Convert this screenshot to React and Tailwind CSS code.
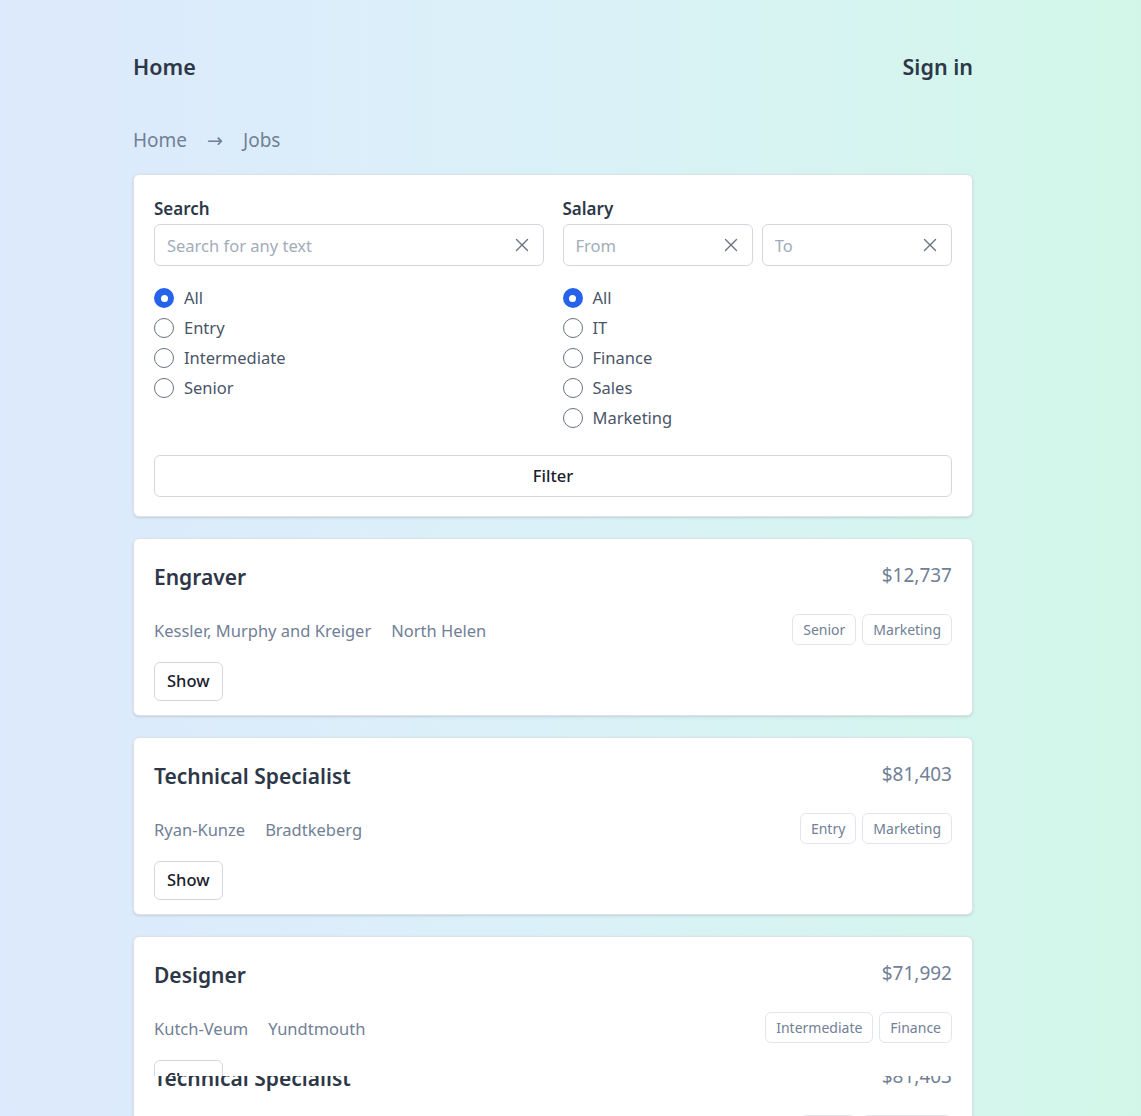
import { useState } from 'react'

const levels = ['All', 'Entry', 'Intermediate', 'Senior']
const categories = ['All', 'IT', 'Finance', 'Sales', 'Marketing']

const jobs = [
  { id: 1, title: 'Engraver', salary: '$12,737', company: 'Kessler, Murphy and Kreiger', city: 'North Helen', tags: ['Senior', 'Marketing'] },
  { id: 2, title: 'Technical Specialist', salary: '$81,403', company: 'Ryan-Kunze', city: 'Bradtkeberg', tags: ['Entry', 'Marketing'] },
  { id: 3, title: 'Designer', salary: '$71,992', company: 'Kutch-Veum', city: 'Yundtmouth', tags: ['Intermediate', 'Finance'] },
]

function XIcon() {
  return (
    <svg width="14" height="14" viewBox="0 0 14 14" fill="none" stroke="#6b7280" strokeWidth="1.4" strokeLinecap="round">
      <path d="M1.5 1.5l11 11M12.5 1.5l-11 11" />
    </svg>
  )
}

function Field({ placeholder }) {
  return (
    <div className="flex items-center h-[42px] border border-[#d4d8de] rounded-md bg-white pl-[12px] pr-[14px]">
      <input
        placeholder={placeholder}
        className="flex-1 min-w-0 bg-transparent outline-none text-[16.5px] leading-[24px] pt-[2px] text-[#2d3748] placeholder:text-[#a3acb9]"
      />
      <XIcon />
    </div>
  )
}

function Radio({ label, checked, onChange }) {
  return (
    <label className="flex items-center h-[30px] gap-[10px] cursor-pointer" onClick={onChange}>
      {checked ? (
        <span className="w-[20px] h-[20px] rounded-full bg-[#2563eb] flex items-center justify-center">
          <span className="w-[7px] h-[7px] rounded-full bg-white" />
        </span>
      ) : (
        <span className="w-[20px] h-[20px] rounded-full border-[1.5px] border-[#6b7280] bg-white" />
      )}
      <span className="text-[16.5px] text-[#4a5568]">{label}</span>
    </label>
  )
}

function JobBody({ job }) {
  return (
    <div className="px-[20px] pt-[23px] pb-[14px]">
      <div className="flex items-start justify-between">
        <h2 className="text-[21px] leading-[30px] font-semibold text-[#2d3748]">{job.title}</h2>
        <span className="text-[19px] leading-[26px] text-[#718096]">{job.salary}</span>
      </div>
      <div className="flex items-center justify-between mt-[22px] h-[31px]">
        <div className="flex gap-[20px] text-[16.5px] leading-[24px] pt-[3px] text-[#718096]">
          <span>{job.company}</span>
          <span>{job.city}</span>
        </div>
        <div className="flex gap-[6px]">
          {job.tags.map(t => (
            <span key={t} className="h-[31px] px-[10px] flex items-center border border-[#e2e6ec] rounded-md text-[14px] text-[#718096]">
              {t}
            </span>
          ))}
        </div>
      </div>
      <button className="mt-[17px] h-[39px] px-[12px] border border-[#d4d8de] rounded-md bg-white text-[16.5px] font-medium text-[#1a202c]">
        Show
      </button>
    </div>
  )
}

function JobCard({ job, className = '', children }) {
  return (
    <div className={`relative bg-white border border-[#dde2e9] rounded-md shadow-sm ${className}`}>
      <JobBody job={job} />
      {children}
    </div>
  )
}

export default function App() {
  const [level, setLevel] = useState('All')
  const [category, setCategory] = useState('All')

  return (
    <div
      className="h-[1116px] overflow-hidden bg-linear-to-r from-[#dde9fc] via-[#daf1f8] to-[#d2f7e8]"
      style={{ fontFamily: '"Noto Sans", "Open Sans", sans-serif' }}
    >
      <div className="ml-[133px] w-[840px] pt-[52px]">
        <nav className="flex items-center justify-between">
          <a className="text-[21.5px] leading-[30px] font-semibold text-[#2d3748]">Home</a>
          <a className="text-[21.5px] leading-[30px] font-semibold text-[#2d3748]">Sign in</a>
        </nav>

        <div className="flex items-center gap-[20px] mt-[45px] text-[19px] leading-[26px] text-[#718096]">
          <span>Home</span>
          <span style={{ fontFamily: '"DejaVu Sans", sans-serif' }} className="text-[19px]">→</span>
          <span>Jobs</span>
        </div>

        <div className="mt-[21px] bg-white border border-[#dde2e9] rounded-md shadow-sm px-[20px] pt-[21px] pb-[19px]">
          <div className="grid grid-cols-2 gap-[19px]">
            <div>
              <div className="text-[17px] leading-[24px] pt-[1px] font-semibold text-[#2d3748]">Search</div>
              <div className="mt-[3px]">
                <Field placeholder="Search for any text" />
              </div>
              <div className="mt-[17px]">
                {levels.map(l => (
                  <Radio key={l} label={l} checked={level === l} onChange={() => setLevel(l)} />
                ))}
              </div>
            </div>
            <div>
              <div className="text-[17px] leading-[24px] pt-[1px] font-semibold text-[#2d3748]">Salary</div>
              <div className="mt-[3px] grid grid-cols-2 gap-[9px]">
                <Field placeholder="From" />
                <Field placeholder="To" />
              </div>
              <div className="mt-[17px]">
                {categories.map(c => (
                  <Radio key={c} label={c} checked={category === c} onChange={() => setCategory(c)} />
                ))}
              </div>
            </div>
          </div>
          <button className="mt-[22px] w-full h-[42px] border border-[#d4d8de] rounded-md bg-white text-[16.5px] font-medium text-[#1a202c]">
            Filter
          </button>
        </div>

        <div className="mt-[21px] flex flex-col gap-[21px]">
          <JobCard job={jobs[0]} />
          <JobCard job={jobs[1]} />
          <JobCard job={jobs[2]} className="min-h-[200px]">
            <div className="absolute left-0 right-0 top-[139px] bottom-0 bg-white overflow-hidden">
              <div className="-mt-[36px]">
                <JobBody job={jobs[1]} />
              </div>
            </div>
          </JobCard>
        </div>
      </div>
    </div>
  )
}
